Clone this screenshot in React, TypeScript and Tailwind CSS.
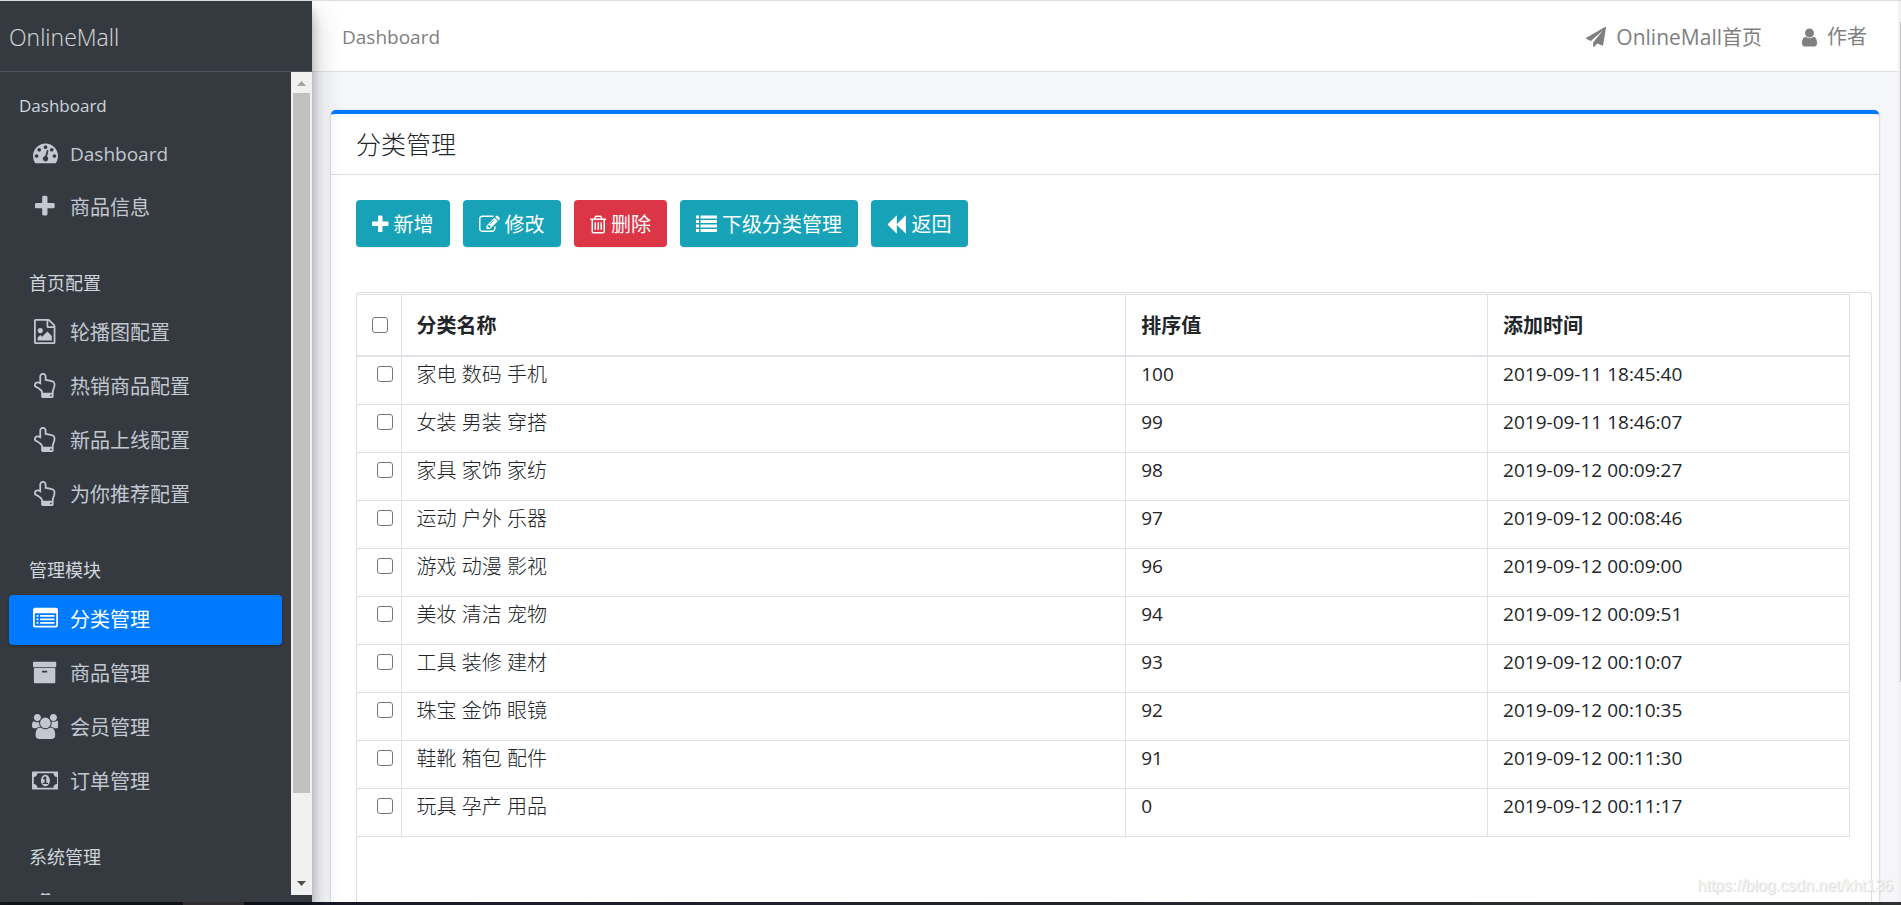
import type { ReactNode } from "react";
import { FaUserSecret } from "react-icons/fa";

const ICONS = {
  dashboard: {
    box: "0 0 1792 1792",
    d: "M384 1152q0-53-37.5-90.5t-90.5-37.5-90.5 37.5-37.5 90.5 37.5 90.5 90.5 37.5 90.5-37.5 37.5-90.5zm192-448q0-53-37.5-90.5t-90.5-37.5-90.5 37.5-37.5 90.5 37.5 90.5 90.5 37.5 90.5-37.5 37.5-90.5zm428 481l101-382q6-26-7.5-48.5t-38.5-29.5-48 6.5-30 39.5l-101 382q-60 5-107 43.5t-63 98.5q-20 77 20 146t117 89 146-20 89-117q16-60-6-117t-72-91zm660-33q0-53-37.5-90.5t-90.5-37.5-90.5 37.5-37.5 90.5 37.5 90.5 90.5 37.5 90.5-37.5 37.5-90.5zm-640-640q0-53-37.5-90.5t-90.5-37.5-90.5 37.5-37.5 90.5 37.5 90.5 90.5 37.5 90.5-37.5 37.5-90.5zm448 192q0-53-37.5-90.5t-90.5-37.5-90.5 37.5-37.5 90.5 37.5 90.5 90.5 37.5 90.5-37.5 37.5-90.5zm320 448q0 261-141 483-19 29-54 29h-1402q-35 0-54-29-141-221-141-483 0-182 71-348t191-286 286-191 348-71 348 71 286 191 191 286 71 348z",
  },
  plus: {
    box: "192 0 1408 1792",
    d: "M1600 736v192q0 40-28 68t-68 28h-416v416q0 40-28 68t-68 28h-192q-40 0-68-28t-28-68v-416h-416q-40 0-68-28t-28-68v-192q0-40 28-68t68-28h416v-416q0-40 28-68t68-28h192q40 0 68 28t28 68v416h416q40 0 68 28t28 68z",
  },
  image: {
    box: "128 0 1536 1792",
    d: "M1596 380q28 28 48 76t20 88v1152q0 40-28 68t-68 28h-1344q-40 0-68-28t-28-68v-1600q0-40 28-68t68-28h896q40 0 88 20t76 48zm-444-244v376h376q-10-29-22-41l-313-313q-12-12-41-22zm384 1528v-1024h-416q-40 0-68-28t-28-68v-416h-768v1536h1280zm-128-448v320h-1024v-192l192-192 128 128 384-384zm-832-192q-80 0-136-56t-56-136 56-136 136-56 136 56 56 136-56 136-136 56z",
  },
  hand: {
    box: "128 0 1536 1792",
    d: "M1408 1600q0-26-19-45t-45-19-45 19-19 45 19 45 45 19 45-19 19-45zm128-764q0-189-167-189-26 0-56 5-16-30-52.5-47.5t-73.5-17.5-69 18q-50-53-119-53-25 0-55.5 10t-47.5 25v-331q0-52-38-90t-90-38q-51 0-89.5 39t-38.5 89v576q-20 0-48.5-15t-55-33-68-33-84.5-15q-67 0-97.5 44.5t-30.5 115.5q0 24 139 90 44 24 65 37 64 40 145 112 81 71 106 101 57 69 57 140v32h640v-32q0-72 32-167t64-193.5 32-179.5zm128-5q0 133-69 322-59 164-59 223v288q0 53-37.5 90.5t-90.5 37.5h-640q-53 0-90.5-37.5t-37.5-90.5v-288q0-10-4.5-21.5t-14-23.5-18-22.5-22.5-24-21.5-20.5-21.5-19-17-14q-74-65-129-100-21-13-62-33t-72-37-63-40.5-49.5-55-17.5-69.5q0-125 67-206.5t189-81.5q68 0 128 22v-374q0-104 77-181t179-77q105 0 181 75.5t76 180.5v169q62 4 119 37 21-3 43-3 101 0 178 60 139-1 219.5 85t80.5 227z",
  },
  listAlt: {
    box: "0 0 1792 1792",
    d: "M160 128h1472q160 0 160 160v1088q0 160-160 160h-1472q-160 0-160-160v-1088q0-160 160-160zm-32 384v832q0 64 64 64h1408q64 0 64-64v-832zm128 128h128v128h-128zm256 0h1024v128h-1024zm-256 256h128v128h-128zm256 0h1024v128h-1024zm-256 256h128v128h-128zm256 0h1024v128h-1024z",
  },
  archive: {
    box: "64 0 1664 1792",
    d: "M1088 832q0-26-19-45t-45-19h-256q-26 0-45 19t-19 45 19 45 45 19h256q26 0 45-19t19-45zm576-192v960q0 26-19 45t-45 19h-1408q-26 0-45-19t-19-45v-960q0-26 19-45t45-19h1408q26 0 45 19t19 45zm64-448v256q0 26-19 45t-45 19h-1536q-26 0-45-19t-19-45v-256q0-26 19-45t45-19h1536q26 0 45 19t19 45z",
  },
  users: {
    box: "64 0 1920 1792",
    d: "M657 896q-162 5-265 128h-134q-82 0-138-40.5t-56-118.5q0-353 124-353 6 0 43.5 21t97.5 42.5 119 21.5q67 0 133-23-5 37-5 66 0 159 90 290zm1071 637q0 120-73 189.5t-194 69.5h-874q-121 0-194-69.5t-73-189.5q0-53 3.5-103.5t14-109 26.5-108.5 43-97.5 62-81 85.5-53.5 111.5-20q10 0 43 21.5t73 48 107 48 135 21.5 135-21.5 107-48 73-48 43-21.5q61 0 111.5 20t85.5 53.5 62 81 43 97.5 26.5 108.5 14 109 3.5 103.5zm-1024-1277q0 106-75 181t-181 75-181-75-75-181 75-181 181-75 181 75 75 181zm704 384q0 159-112.5 271.5t-271.5 112.5-271.5-112.5-112.5-271.5 112.5-271.5 271.5-112.5 271.5 112.5 112.5 271.5zm576 225q0 78-56 118.5t-138 40.5h-134q-103-123-265-128 90-131 90-290 0-29-5-66 66 23 133 23 59 0 119-21.5t97.5-42.5 43.5-21q124 0 124 353zm-128-609q0 106-75 181t-181 75-181-75-75-181 75-181 181-75 181 75 75 181z",
  },
  money: {
    box: "0 0 1920 1792",
    d: "M768 1152h384v-96h-128v-448h-114l-148 137 77 80q42-37 55-57h2v288h-128v96zm512-256q0 70-21 142t-59.5 134-101.5 101-138 39-138-39-101.5-101-59.5-134-21-142 21-142 59.5-134 101.5-101 138-39 138 39 101.5 101 59.5 134 21 142zm512 256v-512q-106 0-181-75t-75-181h-1152q0 106-75 181t-181 75v512q106 0 181 75t75 181h1152q0-106 75-181t181-75zm128-832v1152q0 26-19 45t-45 19h-1792q-26 0-45-19t-19-45v-1152q0-26 19-45t45-19h1792q26 0 45 19t19 45z",
  },
  plane: {
    box: "0 0 1792 1792",
    d: "M1764 11q33 24 27 64l-256 1536q-5 29-32 45-14 8-31 8-11 0-24-5l-453-185-242 295q-18 23-49 23-13 0-22-4-19-7-30.5-23.5t-11.5-36.5v-349l864-1059-1069 925-395-162q-37-14-40-55-2-40 32-59l1664-960q15-9 32-9 20 0 36 11z",
  },
  user: {
    box: "256 0 1280 1792",
    d: "M1536 1399q0 109-62.5 187t-150.5 78h-854q-88 0-150.5-78t-62.5-187q0-85 8.5-160.5t31.5-152 58.5-131 94-89 134.5-34.5q131 128 313 128t313-128q76 0 134.5 34.5t94 89 58.5 131 31.5 152 8.5 160.5zm-256-887q0 159-112.5 271.5t-271.5 112.5-271.5-112.5-112.5-271.5 112.5-271.5 271.5-112.5 271.5 112.5 112.5 271.5z",
  },
  edit: {
    box: "0 0 1792 1792",
    d: "M888 1184l116-116-152-152-116 116v56h96v96h56zm440-720q-16-16-33 1l-350 350q-17 17-1 33t33-1l350-350q17-17 1-33zm80 594v190q0 119-84.5 203.5t-203.5 84.5h-832q-119 0-203.5-84.5t-84.5-203.5v-832q0-119 84.5-203.5t203.5-84.5h832q63 0 117 25 15 7 18 23 3 17-9 29l-49 49q-14 14-32 8-23-6-45-6h-832q-66 0-113 47t-47 113v832q0 66 47 113t113 47h832q66 0 113-47t47-113v-126q0-13 9-22l64-64q15-15 35-7t20 29zm-96-738l288 288-672 672h-288v-288zm444 132l-92 92-288-288 92-92q28-28 68-28t68 28l152 152q28 28 28 68t-28 68z",
  },
  trash: {
    box: "192 0 1408 1792",
    d: "M704 736v576q0 14-9 23t-23 9h-64q-14 0-23-9t-9-23v-576q0-14 9-23t23-9h64q14 0 23 9t9 23zm256 0v576q0 14-9 23t-23 9h-64q-14 0-23-9t-9-23v-576q0-14 9-23t23-9h64q14 0 23 9t9 23zm256 0v576q0 14-9 23t-23 9h-64q-14 0-23-9t-9-23v-576q0-14 9-23t23-9h64q14 0 23 9t9 23zm128 724v-948h-896v948q0 22 7 40.5t14.5 27 10.5 8.5h832q3 0 10.5-8.5t14.5-27 7-40.5zm-672-1076h448l-48-117q-7-9-17-11h-317q-10 2-17 11zm928 32v64q0 14-9 23t-23 9h-96v948q0 83-47 143.5t-113 60.5h-832q-66 0-113-58.5t-47-141.5v-952h-96q-14 0-23-9t-9-23v-64q0-14 9-23t23-9h309l70-167q15-37 54-63t79-26h320q40 0 79 26t54 63l70 167h309q14 0 23 9t9 23z",
  },
  list: {
    box: "0 0 1792 1792",
    d: "M0 128h256v256h-256zm384 0h1408v256h-1408zm-384 384h256v256h-256zm384 0h1408v256h-1408zm-384 384h256v256h-256zm384 0h1408v256h-1408zm-384 384h256v256h-256zm384 0h1408v256h-1408z",
  },
  backward: {
    box: "122 0 1664 1792",
    d: "M1683 141q19-19 32-13t13 32v1472q0 26-13 32t-32-13l-710-710q-9-9-13-19v710q0 26-13 32t-32-13l-710-710q-19-19-19-45t19-45l710-710q19-19 32-13t13 32v710q4-10 13-19z",
  },
};

type IconName = keyof typeof ICONS;

function Icon({ name, className }: { name: IconName; className: string }) {
  return (
    <svg
      viewBox={ICONS[name].box}
      className={`${className} w-auto shrink-0 fill-current`}
      aria-hidden="true"
    >
      <path d={ICONS[name].d} />
    </svg>
  );
}

type MenuItem = { label: string; icon: IconName; active?: boolean };

const MENU: { title: string; items: MenuItem[] }[] = [
  {
    title: "首页配置",
    items: [
      { label: "轮播图配置", icon: "image" },
      { label: "热销商品配置", icon: "hand" },
      { label: "新品上线配置", icon: "hand" },
      { label: "为你推荐配置", icon: "hand" },
    ],
  },
  {
    title: "管理模块",
    items: [
      { label: "分类管理", icon: "listAlt", active: true },
      { label: "商品管理", icon: "archive" },
      { label: "会员管理", icon: "users" },
      { label: "订单管理", icon: "money" },
    ],
  },
];

const ACTIONS: { label: string; icon: IconName; danger?: boolean }[] = [
  { label: "新增", icon: "plus" },
  { label: "修改", icon: "edit" },
  { label: "删除", icon: "trash", danger: true },
  { label: "下级分类管理", icon: "list" },
  { label: "返回", icon: "backward" },
];

const ROWS = [
  { name: "家电 数码 手机", rank: 100, time: "2019-09-11 18:45:40" },
  { name: "女装 男装 穿搭", rank: 99, time: "2019-09-11 18:46:07" },
  { name: "家具 家饰 家纺", rank: 98, time: "2019-09-12 00:09:27" },
  { name: "运动 户外 乐器", rank: 97, time: "2019-09-12 00:08:46" },
  { name: "游戏 动漫 影视", rank: 96, time: "2019-09-12 00:09:00" },
  { name: "美妆 清洁 宠物", rank: 94, time: "2019-09-12 00:09:51" },
  { name: "工具 装修 建材", rank: 93, time: "2019-09-12 00:10:07" },
  { name: "珠宝 金饰 眼镜", rank: 92, time: "2019-09-12 00:10:35" },
  { name: "鞋靴 箱包 配件", rank: 91, time: "2019-09-12 00:11:30" },
  { name: "玩具 孕产 用品", rank: 0, time: "2019-09-12 00:11:17" },
];

function NavLink({
  children,
  icon,
  active,
  label,
}: {
  children?: ReactNode;
  icon: ReactNode;
  active?: boolean;
  label?: string;
}) {
  return (
    <a
      href="#"
      aria-label={label}
      className={`mb-1 flex h-[50px] items-center rounded px-5 ${
        active
          ? "bg-[#007bff] text-white shadow-[0_1px_3px_rgba(0,0,0,0.3)]"
          : "text-[#c2c7d0]"
      }`}
    >
      <span className="mr-[9px] flex w-8 shrink-0 justify-center pb-1">{icon}</span>
      {children}
    </a>
  );
}

function Sidebar() {
  return (
    <aside className="z-10 flex w-[312px] shrink-0 flex-col bg-[#343a40] pb-[7px] shadow-[0_14px_28px_rgba(0,0,0,0.25),0_10px_10px_rgba(0,0,0,0.22)]">
      <a
        href="#"
        className="flex h-[71px] shrink-0 items-center border-b border-[#4b545c] px-[9px] pt-0.5 text-[23px] font-light text-white/80"
      >
        OnlineMall
      </a>
      <div className="flex min-h-0 flex-1">
        <nav className="flex-1 overflow-hidden px-[9px] pt-2">
          <h2 className="h-[49px] px-[10px] pt-[14px] text-[17px] leading-6 text-[#d0d4db]">
            Dashboard
          </h2>
          <NavLink icon={<Icon name="dashboard" className="h-[25px]" />}>
            <span className="text-[19px]">Dashboard</span>
          </NavLink>
          <NavLink icon={<Icon name="plus" className="h-[25px]" />}>商品信息</NavLink>
          {MENU.map((group) => (
            <div key={group.title}>
              <h2 className="h-[71px] px-5 pt-[34px] text-lg leading-6 text-[#d0d4db]">
                {group.title}
              </h2>
              {group.items.map((item) => (
                <NavLink
                  key={item.label}
                  active={item.active}
                  icon={<Icon name={item.icon} className="h-[25px]" />}
                >
                  {item.label}
                </NavLink>
              ))}
            </div>
          ))}
          <h2 className="h-[71px] px-5 pt-[34px] text-lg leading-6 text-[#d0d4db]">
            系统管理
          </h2>
          <NavLink label="修改密码" icon={<FaUserSecret className="h-[25px] w-auto" />} />
        </nav>

        {/* Scrollbar */}
        <div className="flex w-[21px] shrink-0 flex-col items-center bg-[#f1f1f1]">
          <svg viewBox="0 0 21 21" className="size-[21px] shrink-0 fill-[#a3a3a3]">
            <path d="M6 14h9l-4.500-5z" />
          </svg>
          <div className="h-[700px] w-[17px] bg-[#c1c1c1]" />
          <svg viewBox="0 0 21 21" className="mt-auto size-[21px] shrink-0 fill-[#505050]">
            <path d="M6 7h9l-4.500 5z" />
          </svg>
        </div>
      </div>
    </aside>
  );
}

function Navbar() {
  return (
    <header className="flex h-[71px] shrink-0 items-center justify-between border-b border-[#dee2e6] bg-white pt-0.5 pr-[31px] pl-[30px] text-[#808080]">
      <a href="#" className="text-[19px]">
        Dashboard
      </a>
      <div className="flex items-center gap-10">
        <a href="#" className="flex items-center gap-[10px]">
          <Icon name="plane" className="h-5" />
          <span>
            <span className="text-[21px]">OnlineMall</span>首页
          </span>
        </a>
        <a href="#" className="flex items-center gap-[10px]">
          <Icon name="user" className="h-[21px]" />
          作者
        </a>
      </div>
    </header>
  );
}

function CheckBox({ label }: { label: string }) {
  return (
    <input
      type="checkbox"
      aria-label={label}
      className="block size-4 appearance-none rounded-[3px] border border-[#767676] bg-white checked:bg-[#007bff]"
    />
  );
}

function CategoryTable() {
  return (
    <div className="mr-[-18px] flex-1 rounded-t border border-b-0 border-[#ddd] pt-px pr-[21px]">
      <table className="w-full table-fixed border-collapse text-left">
        <colgroup>
          <col className="w-11" />
          <col />
          <col className="w-[24.25%]" />
          <col className="w-[24.25%]" />
        </colgroup>
        <thead>
          <tr className="h-[61px]">
            <th className="border border-b-2 border-l-0 border-[#dee2e6] pl-[15px]">
              <CheckBox label="全选" />
            </th>
            {["分类名称", "排序值", "添加时间"].map((title) => (
              <th
                key={title}
                className="border border-b-2 border-[#dee2e6] px-[15px] pt-0.5 font-bold"
              >
                {title}
              </th>
            ))}
          </tr>
        </thead>
        <tbody>
          {ROWS.map((row) => (
            <tr key={row.name} className="h-12 align-top first:h-[49px]">
              <td className="border border-l-0 border-[#dee2e6] pt-[9px] pl-5">
                <CheckBox label={row.name} />
              </td>
              <td className="border border-[#dee2e6] px-[15px] pt-[3px] font-light">
                {row.name}
              </td>
              <td className="border border-[#dee2e6] px-[15px] pt-0.5 text-[19px]">{row.rank}</td>
              <td className="border border-[#dee2e6] px-[15px] pt-0.5 text-[19px]">{row.time}</td>
            </tr>
          ))}
        </tbody>
      </table>
    </div>
  );
}

export default function App() {
  return (
    <div className="relative flex h-screen flex-col overflow-hidden border-t border-[#dcdde2] font-['Open_Sans','Noto_Sans_CJK_SC',sans-serif] text-xl leading-[30px] text-[#212529]">
      <div className="flex min-h-0 flex-1">
        <Sidebar />
        <div className="flex min-w-0 flex-1 flex-col bg-[#f4f6f9]">
          <Navbar />
          <main className="flex min-h-0 flex-1 flex-col overflow-hidden px-[19px] pt-[38px]">
            <section className="flex flex-1 flex-col rounded-t-[5px] border-t-4 border-[#007bff] bg-white shadow-[0_0_1px_rgba(0,0,0,0.3),0_1px_3px_rgba(0,0,0,0.2)]">
              <h1 className="flex h-[61px] shrink-0 items-center border-b border-[#dfdfdf] px-[25px] text-[25px] font-light">
                分类管理
              </h1>
              <div className="flex flex-1 flex-col px-[25px] pt-[25px]">
                <div className="mb-[45px] flex gap-[13px]">
                  {ACTIONS.map((action) => (
                    <button
                      key={action.label}
                      type="button"
                      className={`flex h-[47px] items-center gap-[5px] rounded px-4 pt-0.5 text-white shadow-[0_1px_1px_rgba(0,0,0,0.08)] ${
                        action.danger ? "bg-[#dc3545]" : "bg-[#17a2b8]"
                      }`}
                    >
                      <Icon name={action.icon} className="h-[21px]" />
                      {action.label}
                    </button>
                  ))}
                </div>
                <CategoryTable />
              </div>
            </section>
          </main>
        </div>

        {/* Page scrollbar */}
        <div className="w-[3px] shrink-0 bg-[#f1f1f1] pt-[21px] pl-0.5">
          <div className="h-3/4 bg-[#c1c1c1]" />
        </div>
      </div>

      <div className="flex h-[3px] shrink-0 bg-[#1b1c26]">
        <div className="ml-[183px] w-[61px] bg-[#4d484c]" />
        <div className="flex-1 bg-linear-to-r from-[#171826] to-[#2f3231]" />
      </div>

      <span className="absolute right-2 bottom-1 z-20 font-['Liberation_Sans',sans-serif] text-base leading-[30px] text-[#f2f2f2] [text-shadow:1px_1px_1px_#d6d6d6]">
        https://blog.csdn.net/kht136
      </span>
    </div>
  );
}
